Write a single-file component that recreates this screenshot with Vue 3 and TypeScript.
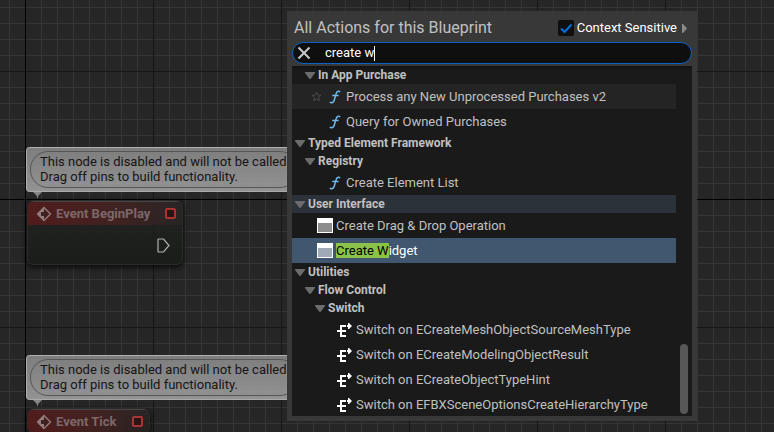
<script setup lang="ts">
import { ref } from 'vue'

type RowKind = 'category' | 'function' | 'widget' | 'switch'

interface Row {
  kind: RowKind
  label: string
  depth: number
  match?: string
  state?: 'hovered' | 'selected' | 'parent'
}

interface GraphNode {
  id: string
  title: string
  hasPin: boolean
}

const query = ref('create w')
const contextSensitive = ref(true)

const rows: Row[] = [
  { kind: 'category', label: 'In App Purchase', depth: 1 },
  { kind: 'function', label: 'Process any New Unprocessed Purchases v2', depth: 2, state: 'hovered' },
  { kind: 'function', label: 'Query for Owned Purchases', depth: 2 },
  { kind: 'category', label: 'Typed Element Framework', depth: 0 },
  { kind: 'category', label: 'Registry', depth: 1 },
  { kind: 'function', label: 'Create Element List', depth: 2 },
  { kind: 'category', label: 'User Interface', depth: 0, state: 'parent' },
  { kind: 'widget', label: 'Create Drag & Drop Operation', depth: 1 },
  { kind: 'widget', label: 'idget', match: 'Create W', depth: 1, state: 'selected' },
  { kind: 'category', label: 'Utilities', depth: 0 },
  { kind: 'category', label: 'Flow Control', depth: 1 },
  { kind: 'category', label: 'Switch', depth: 2 },
  { kind: 'switch', label: 'Switch on ECreateMeshObjectSourceMeshType', depth: 3 },
  { kind: 'switch', label: 'Switch on ECreateModelingObjectResult', depth: 3 },
  { kind: 'switch', label: 'Switch on ECreateObjectTypeHint', depth: 3 },
  { kind: 'switch', label: 'Switch on EFBXSceneOptionsCreateHierarchyType', depth: 3 },
]

const nodes: GraphNode[] = [
  { id: 'begin-play', title: 'Event BeginPlay', hasPin: true },
  { id: 'tick', title: 'Event Tick', hasPin: false },
]
</script>

<template>
  <main class="graph">
    <section v-for="node in nodes" :key="node.id" class="node-group" :class="node.id">
      <div class="bubble">
        <p class="bubble-text">This node is disabled and will not be called.<br />Drag off pins to build functionality.</p>
      </div>
      <svg class="tail" viewBox="0 0 9 7" aria-hidden="true"><path d="M0 0H9L5.500 3.500L4.500 7L3.500 3.500Z" /></svg>
      <article class="node">
        <header class="node-header">
          <svg class="event-icon" viewBox="0 0 16 16" aria-hidden="true">
            <path d="M8 1.500L14.500 8L8 14.500L1.500 8Z" fill="none" stroke="currentColor" stroke-width="1.300" />
            <path d="M8 1.500L1.500 8L8 14.500V10H5V6H8Z" fill="currentColor" />
            <path d="M8 4.500L11.500 8L8 11.500V9.500H5.500V6.500H8Z" fill="#3a2222" />
          </svg>
          <h2 class="node-title">{{ node.title }}</h2>
          <span class="delegate-pin"></span>
        </header>
        <div v-if="node.hasPin" class="node-body">
          <svg class="exec-pin" viewBox="0 0 13 15" aria-hidden="true">
            <path d="M1.500 1H6.500L12 7.500L6.500 14H1.500Q1 14 1 13.500V1.500Q1 1 1.500 1Z" />
          </svg>
        </div>
      </article>
    </section>

    <section class="menu">
      <header class="menu-header">
        <h1 class="menu-title">All Actions for this Blueprint</h1>
        <label class="context">
          <span class="check">
            <input v-model="contextSensitive" type="checkbox" class="check-input" />
            <svg v-if="contextSensitive" class="check-mark" viewBox="0 0 16 16" aria-hidden="true">
              <path d="M3 8.500L6.500 12L13.500 4.500" />
            </svg>
          </span>
          <span>Context Sensitive</span>
        </label>
        <button type="button" class="expander" aria-label="Context options">
          <svg viewBox="0 0 5 9" aria-hidden="true"><path d="M0 0H1L5 4.500L1 9H0Z" /></svg>
        </button>
      </header>

      <div class="search">
        <button type="button" class="clear" aria-label="Clear search" @click="query = ''">
          <svg viewBox="0 0 14 14" aria-hidden="true"><path d="M1.500 1.500L12.500 12.500M12.500 1.500L1.500 12.500" /></svg>
        </button>
        <div class="field">
          <input v-model="query" type="text" class="query" aria-label="Search actions" spellcheck="false" />
          <span class="caret-track" aria-hidden="true"><span class="caret-text">{{ query }}</span><i class="caret"></i></span>
        </div>
      </div>

      <div class="results">
        <ul class="rows">
          <li v-for="row in rows" :key="row.label" class="row" :class="[row.kind, row.state, `depth-${row.depth}`]">
            <button type="button" class="row-button">
              <svg v-if="row.kind === 'category'" class="arrow" viewBox="0 0 10 7" aria-hidden="true">
                <path d="M0 0H10V1L5.500 7H4.500L0 1Z" />
              </svg>
              <svg v-if="row.state === 'hovered'" class="star" viewBox="0 0 11 11" aria-hidden="true">
                <path d="M5.500 1L6.700 4.100L10 4.300L7.500 6.400L8.300 9.700L5.500 7.900L2.700 9.700L3.500 6.400L1 4.300L4.300 4.100Z" />
              </svg>
              <svg v-if="row.kind === 'function'" class="fn-icon" viewBox="0 0 12 14" aria-hidden="true">
                <path d="M11 2.200Q10.400 1.100 9.200 1.300Q7.600 1.600 7 4L5.400 9.800Q4.600 12.600 2.800 12.700Q1.500 12.800 1 11.900" />
                <path d="M3.200 5.500H9.600" />
              </svg>
              <svg v-if="row.kind === 'widget'" class="widget-icon" viewBox="0 0 16 15" aria-hidden="true">
                <rect width="16" height="15" fill="#fff" />
                <rect x="1" y="5" width="14" height="9" class="widget-pane" />
              </svg>
              <svg v-if="row.kind === 'switch'" class="switch-icon" viewBox="0 0 16 14" aria-hidden="true">
                <path d="M9 3H4V13H9M0 8H9" fill="none" stroke="#fff" stroke-width="2" />
                <path d="M10 2H11V0H12L15 3L12 6H11V4H10Z" fill="#fff" />
              </svg>
              <span class="row-label"><mark v-if="row.match" class="match">{{ row.match }}</mark>{{ row.label }}</span>
            </button>
          </li>
        </ul>
        <div class="scroll"><div class="thumb"></div></div>
      </div>
    </section>
  </main>
</template>

<style>
body {
  background: #262626;
}
</style>

<style scoped>
.graph {
  position: relative;
  height: 100vh;
  overflow: hidden;
  font-family: Roboto, "Liberation Sans", sans-serif;
  font-size: 13px;
  color: #c0c0c0;
  background-color: #262626;
  background-image:
    linear-gradient(#000, #000),
    linear-gradient(#000, #000),
    linear-gradient(90deg, #161616 1px, transparent 1px),
    linear-gradient(#161616 1px, transparent 1px),
    linear-gradient(90deg, #353535 1px, transparent 1px),
    linear-gradient(#353535 1px, transparent 1px);
  background-size: 1px 100%, 100% 1px, 128px 128px, 128px 128px, 16px 16px, 16px 16px;
  background-position: 25px 0, 0 199px, 25px 71px, 25px 71px, 9px 7px, 9px 7px;
  background-repeat: no-repeat, no-repeat, repeat, repeat, repeat, repeat;
}

button {
  padding: 0;
  border: 0;
  background: none;
  font: inherit;
  color: inherit;
}

svg {
  display: block;
  flex: none;
}

.node-group {
  position: absolute;
  left: 26px;
  display: flex;
  flex-direction: column;
  align-items: flex-start;
}

.begin-play {
  top: 147px;
}

.tick {
  top: 355px;
}

.bubble {
  padding: 3px;
  border: 1px solid rgba(190, 190, 190, 0.7);
  border-radius: 4px;
  background: linear-gradient(rgba(138, 138, 138, 0.88), rgba(162, 162, 162, 0.88));
}

.bubble-text {
  margin: 0;
  padding: 2px 7px 3px 9px;
  border: 1px solid #555;
  border-radius: 18px;
  line-height: 15px;
  color: #151515;
  white-space: nowrap;
}

.tail {
  width: 9px;
  height: 7px;
  margin-left: 7px;
  fill: #858585;
}

.node {
  margin: 1px 0 0 1px;
  border-radius: 7px;
  overflow: hidden;
  background: linear-gradient(rgba(35, 36, 35, 0.8), rgba(24, 27, 24, 0.88));
  border: 1px solid #2b2b2b;
  box-shadow: 0 2px 5px 1px rgba(0, 0, 0, 0.65);
}

.begin-play .node {
  width: 154px;
}

.tick .node {
  width: 121px;
}

.node-header {
  display: flex;
  align-items: center;
  height: 23px;
  padding: 0 6px 0 8px;
  border-top: 1px solid #4a4444;
  background: linear-gradient(90deg, rgba(98, 26, 26, 0.75), rgba(76, 34, 34, 0.7) 60%, rgba(44, 39, 39, 0.5));
}

.event-icon {
  width: 16px;
  height: 16px;
  color: #917f7f;
}

.node-title {
  flex: 1;
  margin: 0 0 0 4px;
  font-size: 13px;
  font-weight: 700;
  line-height: 16px;
  color: #7d6767;
  white-space: nowrap;
}

.delegate-pin {
  width: 7px;
  height: 7px;
  border: 2px solid #a33;
  border-radius: 2px;
  background: #2a1414;
}

.node-body {
  display: flex;
  justify-content: flex-end;
  padding: 13px 12px 11px;
}

.exec-pin {
  width: 13px;
  height: 15px;
  fill: none;
  stroke: #b0b0b0;
  stroke-width: 1.2;
}

.menu {
  position: absolute;
  left: 287px;
  top: 11px;
  box-sizing: border-box;
  width: 410px;
  height: 410px;
  max-height: calc(100vh - 22px);
  padding: 5px;
  display: flex;
  flex-direction: column;
  background: #383838;
}

.menu-header {
  display: flex;
  align-items: center;
  height: 24px;
  padding: 0 5px 0 2px;
  margin-bottom: 2px;
}

.menu-title {
  flex: 1;
  margin: 0;
  font-size: 16px;
  font-weight: 400;
  line-height: 24px;
  white-space: nowrap;
}

.context {
  display: flex;
  align-items: center;
  gap: 3px;
  line-height: 16px;
  color: #fff;
  white-space: nowrap;
}

.check {
  display: grid;
}

.check-input {
  grid-area: 1 / 1;
  width: 16px;
  height: 16px;
  margin: 0;
  appearance: none;
  border-radius: 2px;
  background: #0f0f0f;
}

.check-mark {
  grid-area: 1 / 1;
  width: 16px;
  height: 16px;
  fill: none;
  stroke: #0070e0;
  stroke-width: 2;
  pointer-events: none;
}

.expander {
  margin-left: 5px;
}

.expander svg {
  width: 5px;
  height: 9px;
  fill: #8a8a8a;
}

.search {
  display: flex;
  align-items: center;
  box-sizing: border-box;
  height: 22px;
  margin-bottom: 2px;
  padding: 0 12px 0 4px;
  border: 1px solid #0a63c4;
  border-radius: 11px;
  background: #0f0f0f;
}

.clear svg {
  width: 14px;
  height: 14px;
  fill: none;
  stroke: #c8c8c8;
  stroke-width: 2;
}

.field {
  display: grid;
  flex: 1;
  margin-left: 14px;
}

.query,
.caret-track {
  grid-area: 1 / 1;
  padding: 0;
  border: 0;
  font: inherit;
  line-height: 16px;
}

.query {
  min-width: 0;
  height: 16px;
  outline: none;
  background: none;
  color: #fff;
  caret-color: transparent;
}

.caret-track {
  display: flex;
  align-items: center;
  pointer-events: none;
  white-space: pre;
}

.caret-text {
  visibility: hidden;
}

.caret {
  width: 1px;
  height: 15px;
  background: #fff;
}

.results {
  display: flex;
  flex: 1;
  min-height: 0;
  overflow: hidden;
  background: linear-gradient(#121212, #1a1a1a 5px);
}

.rows {
  flex: 1;
  margin: 0;
  padding: 0;
  list-style: none;
}

.row-button {
  display: flex;
  align-items: center;
  width: 100%;
  height: 25px;
  text-align: left;
  white-space: nowrap;
}

.category .row-button {
  height: 18px;
  gap: 3px;
  padding-left: 3px;
  font-size: 12px;
  font-weight: 700;
}

.category.depth-1 .row-button {
  padding-left: 13px;
}

.category.depth-2 .row-button {
  padding-left: 23px;
}

.function .row-button {
  padding-left: 37px;
  gap: 5px;
}

.function.hovered .row-button {
  padding-left: 19px;
}

.widget .row-button {
  padding-left: 25px;
  gap: 3px;
}

.switch .row-button {
  padding-left: 45px;
  gap: 3px;
}

.hovered {
  background: #242424;
}

.parent {
  background: #2b323a;
}

.selected {
  background: #40576f;
  color: #fff;
}

.match {
  background: #8bc24a;
  color: #000;
}

.arrow {
  width: 10px;
  height: 7px;
  fill: #6c6c6c;
}

.star {
  width: 11px;
  height: 11px;
  margin-right: 2px;
  fill: none;
  stroke: #4a4a4a;
}

.fn-icon {
  width: 12px;
  height: 14px;
  fill: none;
  stroke: #6cb8ea;
  stroke-width: 1.5;
}

.widget-icon {
  width: 16px;
  height: 15px;
}

.widget-pane {
  fill: #8c8c8c;
}

.selected .widget-pane {
  fill: #9faab6;
}

.switch-icon {
  width: 16px;
  height: 14px;
}

.scroll {
  display: flex;
  flex-direction: column;
  justify-content: flex-end;
  width: 16px;
  padding-bottom: 2px;
  box-sizing: border-box;
}

.thumb {
  width: 8px;
  height: 20%;
  margin-left: 4px;
  border-radius: 4px;
  background: #575757;
}
</style>
